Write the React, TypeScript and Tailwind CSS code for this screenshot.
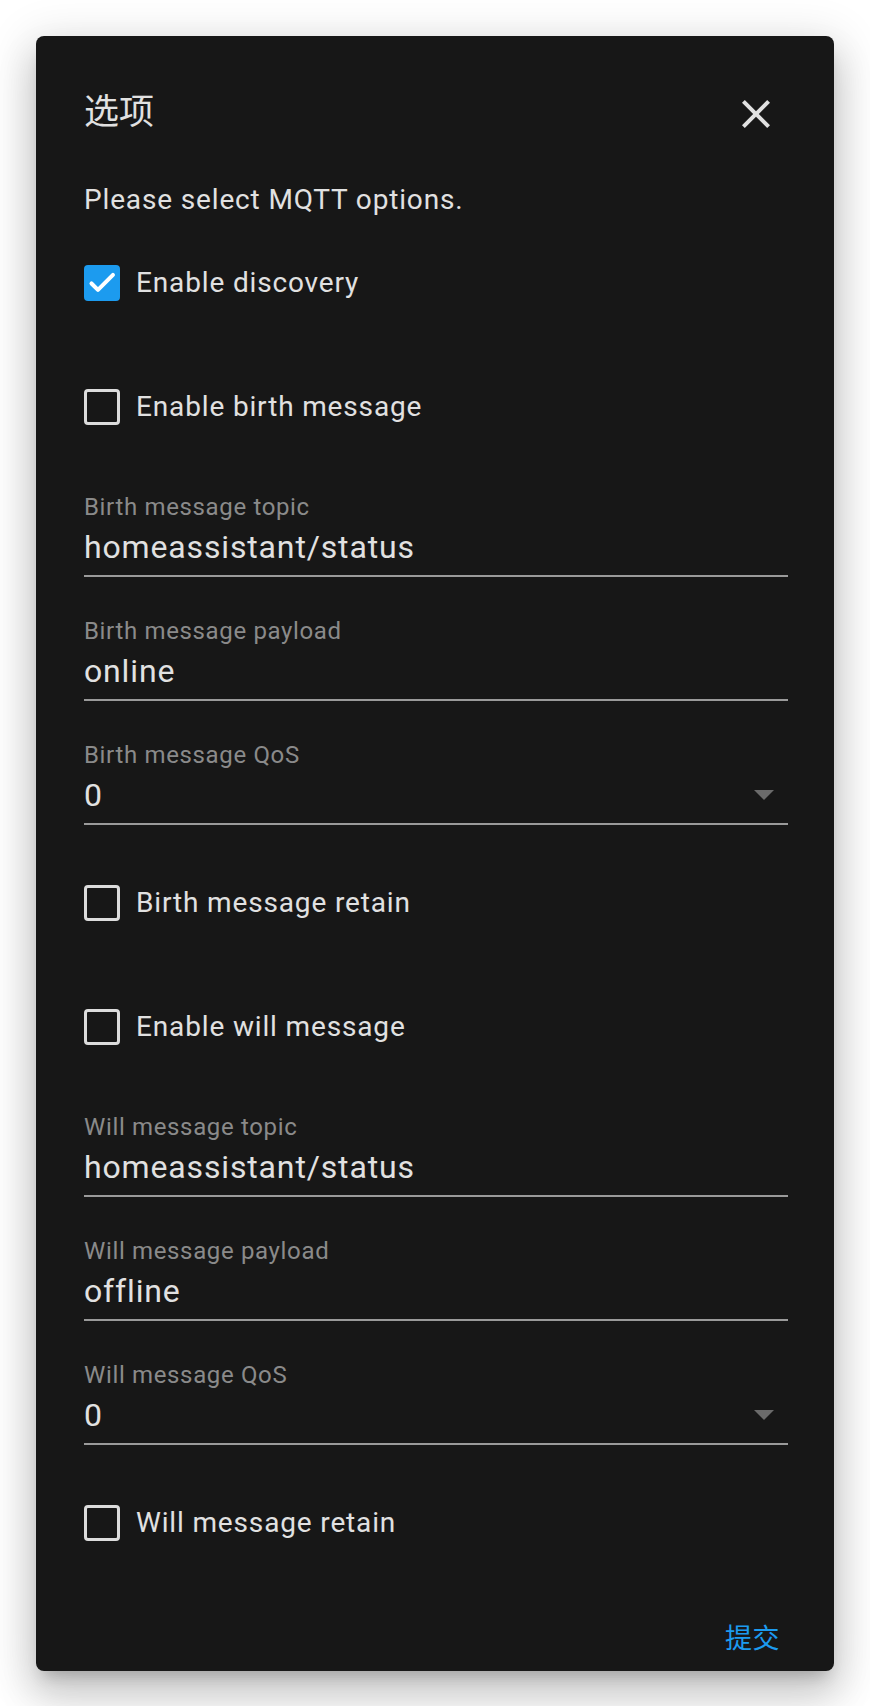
import React from "react";

const font = { fontFamily: "Roboto, 'Noto Sans CJK SC', sans-serif" };

function Checkbox({ checked, label, className = "" }: { checked?: boolean; label: string; className?: string }) {
  return (
    <div className={`flex h-[48px] items-center ${className}`}>
      {checked ? (
        <div className="flex h-[36px] w-[36px] items-center justify-center rounded-[4px] bg-[#1c9bef]">
          <svg width="36" height="36" viewBox="0 0 24 24">
            <path d="M5 12.3 L9.3 16.6 L19.3 6.6" fill="none" stroke="#ffffff" strokeWidth="2.7" strokeLinecap="round" strokeLinejoin="round" />
          </svg>
        </div>
      ) : (
        <div className="h-[36px] w-[36px] rounded-[4px] border-[3px] border-[#dcdcdc]" />
      )}
      <span className="ml-[16px] text-[28px] leading-[40px] tracking-[0.85px] text-[#e1e1e1]">{label}</span>
    </div>
  );
}

function Field({ label, value, select, className = "" }: { label: string; value: string; select?: boolean; className?: string }) {
  return (
    <div className={`border-b-2 border-[#9a9a9a] pb-[8px] ${className}`}>
      <div className="h-[32px] text-[24px] leading-[32px] tracking-[0.65px] text-[#8a8a8a]">{label}</div>
      <div className="mt-[4px] flex h-[40px] items-center justify-between">
        <span className="text-[32px] leading-[40px] tracking-[0.85px] text-[#e1e1e1]">{value}</span>
        {select && (
          <svg width="20" height="10" viewBox="0 0 20 10" className="mr-[14px]">
            <path d="M0 0 L20 0 L10 10 Z" fill="#6b6b6b" />
          </svg>
        )}
      </div>
    </div>
  );
}

export default function App() {
  return (
    <div className="min-h-[1706px] w-[870px] bg-white pt-[36px] pl-[36px]" style={font}>
      <div className="flex w-[798px] flex-col rounded-[8px] bg-[#171717] pt-[53px] pb-[12px] pl-[48px] pr-[46px] shadow-[0_11px_15px_-7px_rgba(0,0,0,0.2),0_24px_38px_3px_rgba(0,0,0,0.14),0_9px_46px_8px_rgba(0,0,0,0.12)]">
        <div className="flex items-start justify-between">
          <div className="h-[48px] text-[35px] leading-[48px] text-[#e1e1e1]">选项</div>
          <div className="mt-[1px] mr-[8px] flex h-[48px] w-[48px] items-center justify-center">
            <svg width="48" height="48" viewBox="0 0 24 24">
              <path d="M19 6.41L17.59 5 12 10.59 6.41 5 5 6.41 10.59 12 5 17.59 6.41 19 12 13.41 17.59 19 19 17.59 13.41 12z" fill="#e1e1e1" />
            </svg>
          </div>
        </div>
        <div className="mt-[42px] h-[40px] text-[28px] leading-[40px] tracking-[0.85px] text-[#e1e1e1]">Please select MQTT options.</div>
        <Checkbox checked label="Enable discovery" className="mt-[39px]" />
        <Checkbox label="Enable birth message" className="mt-[76px]" />
        <Field label="Birth message topic" value="homeassistant/status" className="mt-[60px]" />
        <Field label="Birth message payload" value="online" className="mt-[38px]" />
        <Field label="Birth message QoS" value="0" select className="mt-[38px]" />
        <Checkbox label="Birth message retain" className="mt-[54px]" />
        <Checkbox label="Enable will message" className="mt-[76px]" />
        <Field label="Will message topic" value="homeassistant/status" className="mt-[60px]" />
        <Field label="Will message payload" value="offline" className="mt-[38px]" />
        <Field label="Will message QoS" value="0" select className="mt-[38px]" />
        <Checkbox label="Will message retain" className="mt-[54px]" />
        <div className="mt-[72px] flex justify-end">
          <span className="mr-[8px] h-[40px] text-[27px] leading-[40px] tracking-[0.5px] text-[#1c9bef]">提交</span>
        </div>
      </div>
    </div>
  );
}
